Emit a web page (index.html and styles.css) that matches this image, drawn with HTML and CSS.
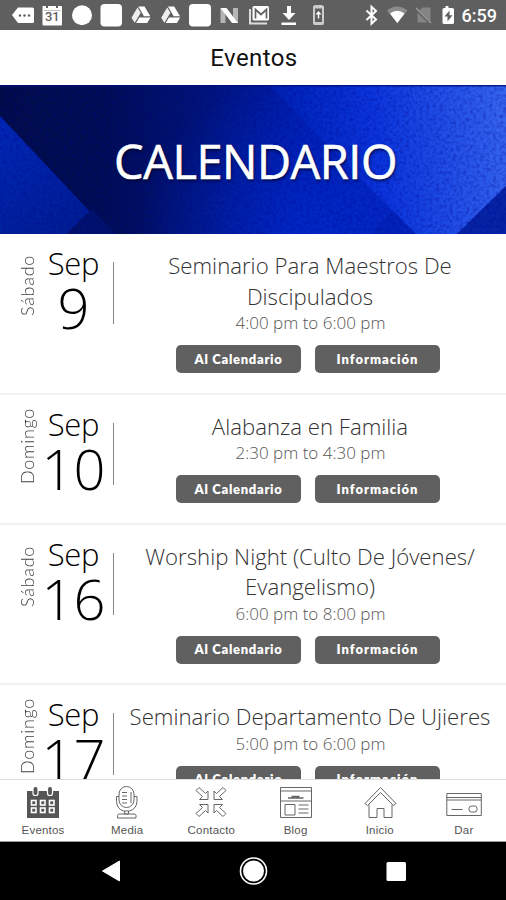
FILE: index.html
```html
<!DOCTYPE html>
<html lang="es">
<head>
    <meta charset="UTF-8">
    <meta name="viewport" content="width=device-width, initial-scale=1.0">
    <title>Eventos</title>
    <link rel="stylesheet" href="styles.css">
</head>
<body>
    <div class="app">
        <!-- Status bar -->
        <div class="status-bar">
            <svg class="status-icons" width="506" height="30" viewBox="0 0 506 30">
                <g fill="#fff">
                    <path d="M12 15l6-7.500h14.500q1.500 0 1.500 1.500v12.500q0 1.500-1.500 1.500H18z"/>
                    <rect x="42.500" y="6" width="19.500" height="19.500" rx="1"/>
                    <circle cx="82" cy="15.300" r="10"/>
                    <rect x="100.500" y="4" width="21.500" height="22.500" rx="4"/>
                    <rect x="189" y="4" width="22" height="22.500" rx="4"/>
                </g>
                <g fill="#5f5f5f">
                    <circle cx="20" cy="15.500" r="1.200"/>
                    <circle cx="24.500" cy="15.500" r="1.200"/>
                    <circle cx="29" cy="15.500" r="1.200"/>
                    <rect x="46" y="5" width="2" height="3"/>
                    <rect x="56" y="5" width="2" height="3"/>
                    <rect x="44" y="10" width="16.500" height=".8" opacity=".5"/>
                </g>
                <text class="calendar-day" x="52.300" y="20.500">31</text>
                <g id="drive">
                    <path d="M138.300 6.500h6.200l5.800 9.700h-6.300z" fill="#fff"/>
                    <path d="M137.500 7.600l3.200 5.200-6 9.900-3.200-5z" fill="#eee"/>
                    <path d="M139.300 17.400h11.200l-3.300 5.500h-11.200z" fill="#fff"/>
                </g>
                <use href="#drive" x="29.700"/>
                <path d="M220.500 8h5v15h-5zM233 8h5v15h-5z" fill="#b5b5b5"/>
                <path d="M220.500 8h6L238 23h-6z" fill="#fff"/>
                <path d="M250 9v14.500h17" fill="none" stroke="#ddd" stroke-width="2"/>
                <rect x="252.500" y="6" width="16.500" height="14.500" rx="1.500" fill="#fff"/>
                <path d="M255.500 18.500V9.500l5.500 5 5.500-5v9" fill="none" stroke="#5f5f5f" stroke-width="1.700"/>
                <path d="M287 6h4v7h4.500l-6.500 7-6.500-7h4.500zM281.500 22.500h14.500v2.500h-14.500z" fill="#fff"/>
                <rect x="314" y="6" width="9" height="18" rx="1.500" fill="none" stroke="#ccc" stroke-width="2"/>
                <path d="M313.500 6h10v2.500h-10zM313.500 22h10v2.500h-10z" fill="#ccc"/>
                <path d="M318.500 11l3 3.500h-2.300v4h-1.400v-4h-2.300z" fill="#fff"/>
                <path d="M366.500 10.500l9.500 9-4.500 4.200V6.800l4.500 4.200-9.500 9" fill="none" stroke="#fff" stroke-width="2"/>
                <path d="M387 10.500q10-8 20.500 0L397.300 23.500z" fill="#8c8c8c"/>
                <path d="M390 13.500q7.300-5.300 14.600 0L397.300 23z" fill="#fff"/>
                <path d="M422.500 7.500h8v15h-13V12z" fill="#858585"/>
                <path d="M415.500 8.500l15 15" stroke="#5f5f5f" stroke-width="3"/>
                <path d="M416 8l15 15" stroke="#999" stroke-width="1.400"/>
                <path d="M445.500 6h3v2h4q1.500 0 1.500 1.500v13q0 1.500-1.500 1.500h-8.500q-1.500 0-1.500-1.500v-13q0-1.500 1.500-1.500h1.500z" fill="#fff"/>
                <path d="M449.500 10.500l-5 6h3v5l5-6.200h-3z" fill="#5f5f5f"/>
            </svg>
            <span class="clock">6:59</span>
        </div>

        <header class="header">Eventos</header>

        <!-- Banner -->
        <div class="banner">
            <svg class="banner-art" width="506" height="149" viewBox="0 0 506 149" preserveAspectRatio="none">
                <defs>
                    <linearGradient id="base" x1="0" y1="0" x2="506" y2="0" gradientUnits="userSpaceOnUse">
                        <stop offset="0" stop-color="#000d48"/>
                        <stop offset=".2" stop-color="#000d52"/>
                        <stop offset=".4" stop-color="#001478"/>
                        <stop offset=".6" stop-color="#001fae"/>
                        <stop offset=".8" stop-color="#0628c4"/>
                        <stop offset="1" stop-color="#0a35d4"/>
                    </linearGradient>
                    <linearGradient id="light" x1="290" y1="60" x2="506" y2="30" gradientUnits="userSpaceOnUse">
                        <stop offset="0" stop-color="#0028c0" stop-opacity=".6"/>
                        <stop offset=".4" stop-color="#0b35dc"/>
                        <stop offset="1" stop-color="#3565ef"/>
                    </linearGradient>
                    <linearGradient id="left" x1="0" y1="30" x2="80" y2="149" gradientUnits="userSpaceOnUse">
                        <stop offset="0" stop-color="#0029b8"/>
                        <stop offset="1" stop-color="#001d91"/>
                    </linearGradient>
                    <radialGradient id="glow" cx="300" cy="150" r="160" gradientUnits="userSpaceOnUse">
                        <stop offset="0" stop-color="#002bd0" stop-opacity=".7"/>
                        <stop offset="1" stop-color="#002bd0" stop-opacity="0"/>
                    </radialGradient>
                    <filter id="grain" x="0" y="0" width="100%" height="100%">
                        <feTurbulence type="fractalNoise" baseFrequency=".3" numOctaves="3" seed="4"/>
                        <feColorMatrix values="0 0 0 0 0  0 0 0 0 0  0 0 0 0 .25  1.6 0 0 0 -.65"/>
                    </filter>
                </defs>
                <rect width="506" height="149" fill="url(#base)"/>
                <rect width="506" height="149" fill="url(#glow)"/>
                <path d="M269 0H506V101L457 149H416L365 98z" fill="url(#light)"/>
                <path d="M393 125L416 149H370z" fill="#001ba0" opacity=".3"/>
                <path d="M506 101V149H457z" fill="#0624a5"/>
                <path d="M0 31L111 149H0z" fill="url(#left)"/>
                <path d="M92 124L116 149H66z" fill="#00126b"/>
                <rect width="506" height="149" filter="url(#grain)" opacity=".5"/>
                <rect width="506" height="1.500" fill="#001078" opacity=".8"/>
            </svg>
            <h1 class="banner-title">CALENDARIO</h1>
        </div>

        <!-- Event list -->
        <main class="events">
            <article class="event">
                <div class="weekday">Sábado</div>
                <div class="date">
                    <div class="month">Sep</div>
                    <div class="day">9</div>
                </div>
                <div class="details">
                    <h2 class="title">Seminario Para Maestros De<br>Discipulados</h2>
                    <div class="time">4:00 pm to 6:00 pm</div>
                    <div class="actions">
                        <button class="btn">Al Calendario</button>
                        <button class="btn info">Información</button>
                    </div>
                </div>
            </article>
            <article class="event">
                <div class="weekday">Domingo</div>
                <div class="date">
                    <div class="month">Sep</div>
                    <div class="day">10</div>
                </div>
                <div class="details">
                    <h2 class="title">Alabanza en Familia</h2>
                    <div class="time">2:30 pm to 4:30 pm</div>
                    <div class="actions">
                        <button class="btn">Al Calendario</button>
                        <button class="btn info">Información</button>
                    </div>
                </div>
            </article>
            <article class="event">
                <div class="weekday">Sábado</div>
                <div class="date">
                    <div class="month">Sep</div>
                    <div class="day">16</div>
                </div>
                <div class="details">
                    <h2 class="title">Worship Night (Culto De Jóvenes/<br>Evangelismo)</h2>
                    <div class="time">6:00 pm to 8:00 pm</div>
                    <div class="actions">
                        <button class="btn">Al Calendario</button>
                        <button class="btn info">Información</button>
                    </div>
                </div>
            </article>
            <article class="event">
                <div class="weekday">Domingo</div>
                <div class="date">
                    <div class="month">Sep</div>
                    <div class="day">17</div>
                </div>
                <div class="details">
                    <h2 class="title">Seminario Departamento De Ujieres</h2>
                    <div class="time">5:00 pm to 6:00 pm</div>
                    <div class="actions">
                        <button class="btn">Al Calendario</button>
                        <button class="btn info">Información</button>
                    </div>
                </div>
            </article>
        </main>

        <!-- Tabs -->
        <nav class="tabs">
            <a class="tab active">
                <svg width="36" height="36" viewBox="0 0 36 36">
                    <path d="M2 6h32v27H2z" fill="#555"/>
                    <g fill="#555" stroke="#fff" stroke-width="1.200">
                        <rect x="8" y="1.500" width="5" height="9" rx="2.300"/>
                        <rect x="22.500" y="1.500" width="5" height="9" rx="2.300"/>
                    </g>
                    <g fill="#555" stroke="#fff" stroke-width="1.600">
                        <rect x="6.500" y="15.500" width="4.500" height="4.500"/>
                        <rect x="15.500" y="15.500" width="4.500" height="4.500"/>
                        <rect x="24.500" y="15.500" width="4.500" height="4.500"/>
                        <rect x="6.500" y="23" width="4.500" height="4.500"/>
                        <rect x="15.500" y="23" width="4.500" height="4.500"/>
                        <rect x="24.500" y="23" width="4.500" height="4.500"/>
                    </g>
                </svg>
                <span>Eventos</span>
            </a>
            <a class="tab">
                <svg class="line-icon" width="36" height="36" viewBox="0 0 36 36">
                    <rect x="10" y="1.500" width="15" height="21" rx="7.500"/>
                    <path d="M10 11.500H7.500v5Q8 24 14.500 26h6Q27.500 24 28 16.500v-5H25M15.500 26v3h4v-3M8.500 33v-2.500q0-1.500 2-1.500h14.500q2 0 2 1.500V33z"/>
                    <path d="M13 7.500h5M13 11h5M13 14.500h5M13 18h5M22 7v11"/>
                </svg>
                <span>Media</span>
            </a>
            <a class="tab">
                <svg class="line-icon" width="36" height="36" viewBox="0 0 36 36">
                    <g id="arrow">
                        <path d="M3 5.500L6 2.500L12.500 8.500L15 6V14.500H6.500L9.500 11.500z"/>
                    </g>
                    <use href="#arrow" transform="translate(36 0) scale(-1 1)"/>
                    <use href="#arrow" transform="translate(0 34) scale(1 -1)"/>
                    <use href="#arrow" transform="translate(36 34) scale(-1 -1)"/>
                </svg>
                <span>Contacto</span>
            </a>
            <a class="tab">
                <svg class="line-icon" width="36" height="36" viewBox="0 0 36 36">
                    <path d="M2.500 2.500h31v30h-31zM2.500 6h31M2.500 16h31"/>
                    <path d="M7 19.500h10v10.500H7zM20.500 20h10M20.500 24h10M20.500 28h10"/>
                    <path d="M10 13h15.500M13.500 11.500h8" stroke-width="1.500"/>
                </svg>
                <span>Blog</span>
            </a>
            <a class="tab">
                <svg class="line-icon" width="36" height="36" viewBox="0 0 36 36">
                    <path d="M3 18.500L18.500 2.500L34 18.500L31.500 20.500L18.500 7.500L5.500 20.500z"/>
                    <path d="M7 19.500V32.500h8V23.500h7v9h8V19.500"/>
                </svg>
                <span>Inicio</span>
            </a>
            <a class="tab">
                <svg class="line-icon" width="36" height="36" viewBox="0 0 36 36">
                    <path d="M.8 8.500h34.500v22H.8zM.8 12.500h34.500M.8 15h34.500"/>
                    <path d="M5.500 24.500h11"/>
                    <rect x="23" y="21" width="8" height="6" rx="2.500"/>
                </svg>
                <span>Dar</span>
            </a>
        </nav>

        <!-- System navigation -->
        <footer class="system-nav">
            <svg width="506" height="58" viewBox="0 0 506 58">
                <path d="M102.500 29L119.500 19v20z" fill="#fff" stroke="#fff" stroke-linejoin="round"/>
                <circle cx="253.500" cy="29" r="13" fill="none" stroke="#fff" stroke-width="1.600"/>
                <circle cx="253.500" cy="29" r="10.500" fill="#fff"/>
                <rect x="386.500" y="20" width="19.500" height="19" rx="1.500" fill="#fff"/>
            </svg>
        </footer>
    </div>
</body>
</html>
```
FILE: styles.css
```css
* {
    margin: 0;
    padding: 0;
    box-sizing: border-box;
}

body {
    background: #fff;
    font-family: 'Open Sans', sans-serif;
}

.app {
    width: 506px;
    height: 900px;
    display: flex;
    flex-direction: column;
    overflow: hidden;
}

svg {
    display: block;
}

.status-bar {
    position: relative;
    height: 30px;
    flex: none;
    display: flex;
    justify-content: flex-end;
    align-items: center;
    padding-right: 9px;
    background: #5f5f5f;
}

.status-icons {
    position: absolute;
    top: 0;
    left: 0;
}

.calendar-day {
    font: 500 13px Roboto, sans-serif;
    fill: #5f5f5f;
    text-anchor: middle;
}

.clock {
    font: 500 18px/30px Roboto, sans-serif;
    color: #fff;
    padding-top: 2px;
}

.header {
    height: 55px;
    flex: none;
    font: 400 24px/56px Roboto, sans-serif;
    letter-spacing: 0.4px;
    text-align: center;
    color: #111;
    padding-left: 2px;
}

.banner {
    position: relative;
    height: 149px;
    flex: none;
    display: flex;
    justify-content: center;
    align-items: center;
    background: #001fae;
}

.banner-art {
    position: absolute;
    top: 0;
    left: 0;
}

.banner-title {
    position: relative;
    font-size: 47px;
    font-weight: 500;
    line-height: 60px;
    letter-spacing: -0.5px;
    color: #fff;
    -webkit-text-stroke: 0.6px #fff;
    text-shadow: 1px 2px 3px rgba(0, 0, 30, 0.7);
    padding: 2px 0 0 5px;
}

.events {
    flex: 1;
    min-height: 0;
    overflow: hidden;
}

.event {
    display: flex;
    align-items: flex-start;
    border-bottom: 2px solid #f1f1f1;
}

.weekday {
    width: 24px;
    height: 74px;
    margin: 15px 0 0 15px;
    writing-mode: vertical-rl;
    transform: rotate(180deg);
    text-align: center;
    font: 300 18px/24px Lato, sans-serif;
    letter-spacing: 0.7px;
    color: #444;
}

.date {
    width: 75px;
    height: 62px;
    margin-top: 28px;
    border-right: 1px solid #888;
    text-align: center;
    font-weight: 300;
    color: #000;
    padding-right: 6px;
}

.month {
    font-size: 31px;
    line-height: 36px;
    letter-spacing: -0.3px;
    margin-top: -17px;
    padding-left: 1px;
}

.day {
    font-size: 56px;
    line-height: 56px;
    margin-top: -2px;
    padding-left: 1px;
}

.details {
    flex: 1;
    padding: 17px 0 19.500px;
    text-align: center;
}

.title {
    font-size: 22.200px;
    font-weight: 300;
    line-height: 30.500px;
    color: #333;
    white-space: nowrap;
}

.time {
    font-size: 17px;
    font-weight: 300;
    line-height: 22px;
    color: #555;
    padding-left: 1px;
}

.actions {
    display: flex;
    justify-content: center;
    gap: 14px;
    margin-top: 11px;
    padding-right: 4px;
}

.btn {
    width: 125px;
    height: 28px;
    border: none;
    border-radius: 5px;
    background: #606060;
    color: #fff;
    font: 800 13px/27px Lato, sans-serif;
    letter-spacing: 0.7px;
}

.info {
    letter-spacing: 1px;
}

.tabs {
    height: 63px;
    flex: none;
    display: grid;
    grid-template-columns: repeat(6, 1fr);
    background: #fff;
    border-top: 1px solid #ddd;
    border-bottom: 1px solid #999;
    padding-left: 1px;
}

.tab {
    display: flex;
    flex-direction: column;
    align-items: center;
    padding-top: 5px;
    font: 11.500px/18px 'Liberation Sans', Arial, sans-serif;
    letter-spacing: 0.2px;
    color: #555;
}

.line-icon {
    fill: none;
    stroke: #666;
    stroke-width: 1;
}

.system-nav {
    height: 58px;
    flex: none;
    background: #000;
}
```
